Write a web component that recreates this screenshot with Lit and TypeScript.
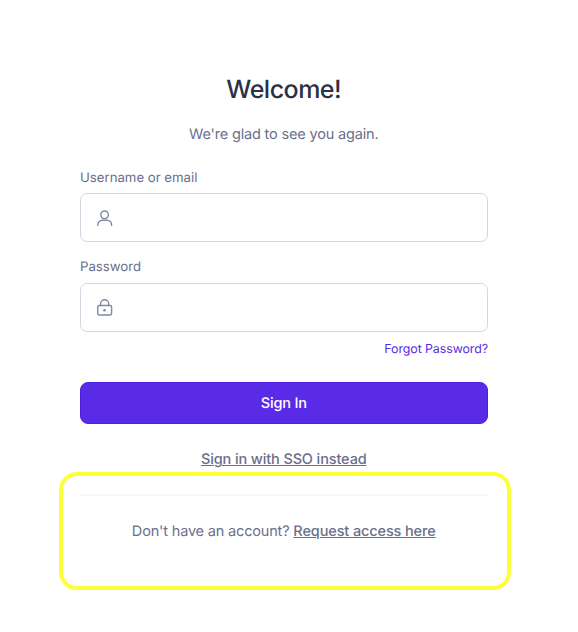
import { LitElement, html, css, svg } from "lit";
import { customElement } from "lit/decorators.js";

const userIcon = svg`<circle cx="8.6" cy="5.8" r="3.8"/><path d="M1.8 16.4v-.6a4.6 4.6 0 0 1 4.6-4.6h4.6a4.6 4.6 0 0 1 4.6 4.6v.6"/>`;
const lockIcon = svg`<rect x="1.7" y="6.5" width="13.9" height="9.5" rx="1.4"/><path d="M4.6 6.5V4.8a4.05 4.05 0 0 1 8.1 0v1.7"/><circle class="dot" cx="8.6" cy="11.3" r="1.3"/>`;

@customElement("app-root")
export class AppRoot extends LitElement {
  static styles = css`
    :host {
      display: block;
      box-sizing: border-box;
      height: 632px;
      overflow: hidden;
      background: #fff;
      color: #696f8c;
      font-family: Inter, "Liberation Sans", sans-serif;
      font-size: 14.5px;
      text-rendering: geometricPrecision;
    }
    .form {
      display: flex;
      flex-direction: column;
      width: 408.5px;
      margin-left: 79.5px;
      padding-top: 70px;
    }
    h1 {
      margin: 0;
      text-align: center;
      font-size: 25px;
      line-height: 40px;
      font-weight: 500;
      letter-spacing: -0.5px;
      color: #2b3048;
    }
    .sub {
      margin: 14px 0 0;
      text-align: center;
      line-height: 22px;
      letter-spacing: -0.17px;
    }
    .label {
      font-size: 13.2px;
      line-height: 18px;
      margin: 23px 0 6px 0.5px;
    }
    .label.second { margin: 16px 0 7px 0.5px; }
    .field {
      box-sizing: border-box;
      display: flex;
      align-items: center;
      height: 49px;
      padding-left: 15px;
      border: 1px solid #d1d7e3;
      border-radius: 7px;
      background: #fff;
    }
    svg {
      width: 18px;
      height: 18px;
      fill: none;
      stroke: #7f8a9f;
      stroke-width: 1.4;
      stroke-linecap: round;
      stroke-linejoin: round;
    }
    .dot { fill: #7f8a9f; stroke: none; }
    .forgot {
      align-self: flex-end;
      margin-top: 8px;
      font-size: 12.4px;
      line-height: 18px;
      letter-spacing: -0.08px;
      color: #562be6;
      text-decoration: none;
    }
    button {
      height: 42px;
      margin: 24px 0 0;
      padding: 0;
      border: 1px solid #4f20e2;
      border-radius: 8px;
      background: #592be7;
      color: #fff;
      font: 500 14.5px Inter, "Liberation Sans", sans-serif;
      letter-spacing: -0.2px;
      text-rendering: inherit;
    }
    .link {
      color: #696f8c;
      font-weight: 500;
      text-decoration: underline;
      text-decoration-thickness: 1px;
      text-underline-offset: 1px;
      letter-spacing: -0.12px;
    }
    .sso {
      align-self: center;
      margin-top: 25px;
      line-height: 22px;
    }
    .signup {
      box-sizing: border-box;
      width: 452px;
      height: 118px;
      margin: 1px 0 0 -20.5px;
      padding: 18px 19px 0 16.5px;
      border: 4px solid #fdff38;
      border-radius: 18px;
    }
    .rule { height: 2px; background: #f7f7f9; }
    .request {
      margin: 25px 0 0;
      text-align: center;
      line-height: 22px;
      letter-spacing: -0.17px;
    }
  `;

  render() {
    return html`
      <main class="form">
        <h1>Welcome!</h1>
        <p class="sub">We're glad to see you again.</p>
        <span class="label">Username or email</span>
        <div class="field"><svg viewBox="0 0 18 18">${userIcon}</svg></div>
        <span class="label second">Password</span>
        <div class="field"><svg viewBox="0 0 18 18">${lockIcon}</svg></div>
        <a class="forgot">Forgot Password?</a>
        <button>Sign In</button>
        <a class="link sso">Sign in with SSO instead</a>
        <section class="signup">
          <div class="rule"></div>
          <p class="request">Don't have an account? <a class="link">Request access here</a></p>
        </section>
      </main>
    `;
  }
}
